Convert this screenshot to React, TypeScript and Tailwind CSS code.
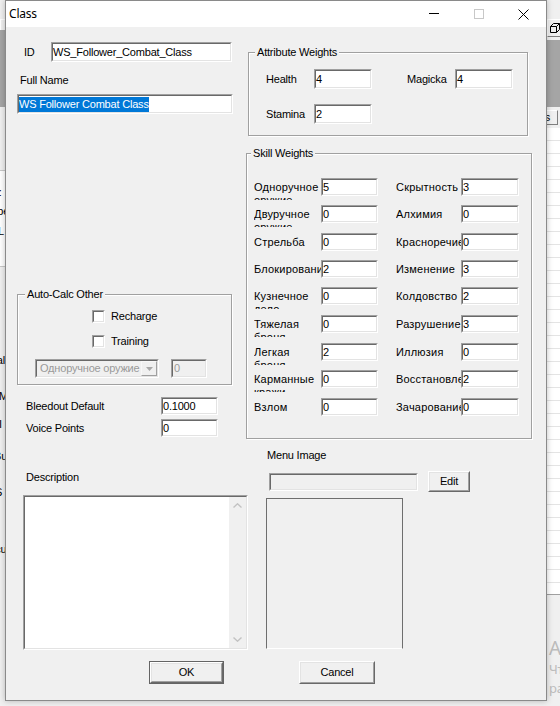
import type { ReactNode } from 'react'

type Skill = { name: string; value: string }

// vertical gap above each skill row (inputs are 18px tall)
const SKILL_ROWS: { gap: string; left: Skill; right: Skill }[] = [
  { gap: '', left: { name: 'Одноручное оружие', value: '5' }, right: { name: 'Скрытность', value: '3' } },
  { gap: 'mt-[9px]', left: { name: 'Двуручное оружие', value: '0' }, right: { name: 'Алхимия', value: '0' } },
  { gap: 'mt-[10px]', left: { name: 'Стрельба', value: '0' }, right: { name: 'Красноречие', value: '0' } },
  { gap: 'mt-[9px]', left: { name: 'Блокирование', value: '2' }, right: { name: 'Изменение', value: '3' } },
  { gap: 'mt-[9px]', left: { name: 'Кузнечное дело', value: '0' }, right: { name: 'Колдовство', value: '2' } },
  { gap: 'mt-[10px]', left: { name: 'Тяжелая броня', value: '0' }, right: { name: 'Разрушение', value: '3' } },
  { gap: 'mt-[10px]', left: { name: 'Легкая броня', value: '2' }, right: { name: 'Иллюзия', value: '0' } },
  { gap: 'mt-[9px]', left: { name: 'Карманные кражи', value: '0' }, right: { name: 'Восстановление', value: '2' } },
  { gap: 'mt-[10px]', left: { name: 'Взлом', value: '0' }, right: { name: 'Зачарование', value: '0' } },
]

function Sunken({
  className = '',
  face = 'bg-white',
  children,
}: {
  className?: string
  face?: string
  children?: ReactNode
}) {
  return (
    <div
      className={`shrink-0 border border-t-[#a0a0a0] border-l-[#a0a0a0] border-r-white border-b-white ${className}`}
    >
      <div
        className={`flex h-full items-center overflow-hidden whitespace-nowrap border border-t-[#696969] border-l-[#696969] border-r-[#e3e3e3] border-b-[#e3e3e3] ${face}`}
      >
        {children}
      </div>
    </div>
  )
}

function TextBox({ value, className }: { value?: string; className: string }) {
  return (
    <Sunken className={className}>
      <span className="leading-[13px]">{value}</span>
    </Sunken>
  )
}

function PushButton({
  label,
  className,
  isDefault = false,
}: {
  label: string
  className: string
  isDefault?: boolean
}) {
  const face = (
    <div className="h-full border border-t-white border-l-white border-r-[#696969] border-b-[#696969]">
      <div className="flex h-full items-center justify-center border border-t-[#e3e3e3] border-l-[#e3e3e3] border-r-[#a0a0a0] border-b-[#a0a0a0] bg-[#f0f0f0]">
        {label}
      </div>
    </div>
  )
  return (
    <div className={`shrink-0 ${isDefault ? 'border border-[#646464]' : ''} ${className}`}>
      {face}
    </div>
  )
}

function Group({
  title,
  className,
  captionAt,
  children,
}: {
  title: string
  className: string
  captionAt: string
  children: ReactNode
}) {
  return (
    <div
      className={`relative shrink-0 border border-[#a0a0a0] shadow-[inset_1px_1px_0_#fff,1px_1px_0_#fff] ${className}`}
    >
      <span
        className={`absolute -top-[7px] bg-[#f0f0f0] px-[2px] leading-[13px] whitespace-nowrap ${captionAt}`}
      >
        {title}
      </span>
      {children}
    </div>
  )
}

function CheckBox({ label, className = '' }: { label: string; className?: string }) {
  return (
    <div className={`flex items-center ${className}`}>
      <Sunken className="h-[13px] w-[13px]" />
      <span className="ml-[6px] leading-[13px]">{label}</span>
    </div>
  )
}

function Chevron({ up }: { up: boolean }) {
  return (
    <svg width="9" height="5" viewBox="0 0 9 5" className="block">
      <polyline
        points={up ? '0.5,4.5 4.5,0.8 8.5,4.5' : '0.5,0.5 4.5,4.2 8.5,0.5'}
        fill="none"
        stroke="#c2c2c2"
        strokeWidth="1.4"
      />
    </svg>
  )
}

function SkillCell({ skill, labelWidth, inputWidth }: { skill: Skill; labelWidth: string; inputWidth: string }) {
  return (
    <>
      <div
        className={`mt-[3px] h-[19px] shrink-0 overflow-hidden leading-[13px] tracking-[0.2px] ${labelWidth}`}
      >
        {skill.name}
      </div>
      <TextBox value={skill.value} className={`h-[18px] ${inputWidth}`} />
    </>
  )
}

function TitleBar() {
  return (
    <div className="flex h-[26px] shrink-0 items-center bg-white">
      <span className="ml-[3px] font-['Noto_Sans',sans-serif] text-[12px] tracking-[-0.2px]">Class</span>
      <div className="ml-auto flex h-full">
        <div className="flex w-[45px] items-center justify-center">
          <svg width="10" height="10" viewBox="0 0 10 10">
            <line x1="0" y1="4.5" x2="10" y2="4.5" stroke="#000" strokeWidth="1" />
          </svg>
        </div>
        <div className="flex w-[45px] items-center justify-center">
          <svg width="10" height="10" viewBox="0 0 10 10">
            <rect x="0.5" y="0.5" width="9" height="9" fill="none" stroke="#c8c8c8" strokeWidth="1" />
          </svg>
        </div>
        <div className="flex w-[45px] items-center justify-center">
          <svg width="11" height="11" viewBox="0 0 11 11">
            <path d="M0.5 0.5 L10.5 10.5 M10.5 0.5 L0.5 10.5" stroke="#000" strokeWidth="1" />
          </svg>
        </div>
      </div>
    </div>
  )
}

function ClassDialog() {
  return (
    <div className="absolute left-[5px] top-0 flex h-[701px] w-[542px] flex-col border border-[#8a8a8a] bg-[#f0f0f0] shadow-[0_0_6px_rgba(0,0,0,0.25)]">
      <TitleBar />

      <div className="flex flex-1 flex-col">
        {/* id / name + attributes */}
        <div className="flex items-start pt-[15px]">
          <div className="ml-[11px] w-[216px] shrink-0">
            <div className="flex items-center">
              <span className="ml-[7px] w-[27px]">ID</span>
              <TextBox value="WS_Follower_Combat_Class" className="h-[20px] w-[181px]" />
            </div>
            <div className="ml-[3px] mt-[12px] leading-[13px]">Full Name</div>
            <Sunken className="mt-[7px] h-[20px] w-[216px]">
              <span className="bg-[#0078d7] leading-[15px] text-white">WS Follower Combat Class</span>
            </Sunken>
          </div>

          <Group title="Attribute Weights" captionAt="left-[6px]" className="ml-[15px] mt-[10px] h-[84px] w-[280px]">
            <div className="pl-[17px] pt-[16px]">
              <div className="flex items-center">
                <span className="w-[48px]">Health</span>
                <TextBox value="4" className="h-[20px] w-[58px]" />
                <span className="ml-[35px] w-[48px]">Magicka</span>
                <TextBox value="4" className="h-[20px] w-[58px]" />
              </div>
              <div className="mt-[15px] flex items-center">
                <span className="w-[48px]">Stamina</span>
                <TextBox value="2" className="h-[20px] w-[58px]" />
              </div>
            </div>
          </Group>
        </div>

        {/* auto-calc + skills */}
        <div className="mt-[17px] flex items-start">
          <div className="w-[240px] shrink-0">
            <Group title="Auto-Calc Other" captionAt="left-[7px]" className="ml-[11px] mt-[141px] h-[91px] w-[215px]">
              <div className="pt-[15px]">
                <CheckBox label="Recharge" className="ml-[74px]" />
                <CheckBox label="Training" className="ml-[74px] mt-[12px]" />
                <div className="ml-[17px] mt-[11px] flex">
                  <Sunken className="h-[19px] w-[124px]" face="bg-[#f0f0f0] text-[#9a9a9a]">
                    <span className="min-w-0 flex-1 overflow-hidden pl-[3px]">Одноручное оружие</span>
                    <div className="h-full w-[16px] shrink-0 border border-t-[#f8f8f8] border-l-[#f8f8f8] border-r-[#a0a0a0] border-b-[#a0a0a0]">
                      <div className="flex h-full items-center justify-center bg-[#f0f0f0]">
                        <svg width="7" height="4" viewBox="0 0 7 4">
                          <path d="M0 0 H7 L3.5 4 Z" fill="#a8a8a8" />
                        </svg>
                      </div>
                    </div>
                  </Sunken>
                  <Sunken className="ml-[12px] h-[19px] w-[36px]" face="bg-[#f0f0f0] text-[#9a9a9a]">
                    <span className="pl-px">0</span>
                  </Sunken>
                </div>
              </div>
            </Group>

            <div className="mt-[12px] flex items-center">
              <span className="ml-[20px] w-[135px]">Bleedout Default</span>
              <TextBox value="0.1000" className="h-[18px] w-[57px]" />
            </div>
            <div className="mt-[4px] flex items-center">
              <span className="ml-[20px] w-[135px]">Voice Points</span>
              <TextBox value="0" className="h-[18px] w-[57px]" />
            </div>
          </div>

          <Group title="Skill Weights" captionAt="left-[4px]" className="h-[286px] w-[286px]">
            <div className="pl-[7px] pt-[24px]">
              {SKILL_ROWS.map((row) => (
                <div key={row.left.name} className={`flex h-[18px] items-start ${row.gap}`}>
                  <SkillCell skill={row.left} labelWidth="w-[67px]" inputWidth="w-[57px]" />
                  <div className="w-[18px] shrink-0" />
                  <SkillCell skill={row.right} labelWidth="w-[65px]" inputWidth="w-[58px]" />
                </div>
              ))}
            </div>
          </Group>
        </div>

        {/* description + menu image */}
        <div className="flex items-start">
          <div className="w-[245px] shrink-0">
            <div className="ml-[20px] mt-[32px] leading-[13px]">Description</div>
            <Sunken className="ml-[17px] mt-[11px] h-[155px] w-[225px]">
              <div className="flex h-full w-full">
                <div className="flex-1 bg-white" />
                <div className="flex w-[17px] flex-col items-center justify-between bg-[#f0f0f0] py-[6px]">
                  <Chevron up />
                  <Chevron up={false} />
                </div>
              </div>
            </Sunken>
          </div>

          <div className="flex-1">
            <div className="ml-[16px] mt-[10px] leading-[13px]">Menu Image</div>
            <div className="ml-[18px] mt-[9px] flex items-center">
              <Sunken className="h-[18px] w-[149px]" face="bg-[#f0f0f0]" />
              <PushButton label="Edit" className="ml-[10px] h-[21px] w-[42px]" />
            </div>
            <div className="ml-[15px] mt-[6px] h-[151px] w-[137px] border border-[#6e6e6e] border-b-white" />
          </div>
        </div>

        <div className="mt-[11px] flex">
          <PushButton label="OK" isDefault className="ml-[143px] h-[23px] w-[75px]" />
          <PushButton label="Cancel" className="ml-[75px] h-[23px] w-[76px]" />
        </div>
      </div>
    </div>
  )
}

// editor window peeking out from behind the dialog
function Backdrop() {
  return (
    <div className="absolute inset-0 bg-[#f0f0f0]">
      <div className="absolute left-0 top-[19px] h-[18px] w-[20px] border border-t-white border-l-white border-r-[#808080] border-b-[#808080]" />
      <div className="absolute left-[547px] top-[19px] flex h-[18px] w-[18px] items-center border border-t-white border-l-white border-r-[#808080] border-b-[#808080] pl-[2px]">
        <svg width="10" height="10" viewBox="0 0 10 10">
          <path d="M0.5 3.5 L3.5 0.5 H9.5 V6.5 L6.5 9.5 H0.5 Z M0.5 3.5 H6.5 V9.5 M6.5 3.5 L9.5 0.5" fill="none" stroke="#000" strokeWidth="1" />
        </svg>
      </div>
      <div className="absolute left-0 top-[30px] h-[77px] w-[20px] bg-[#a5a5a5]" />
      <div className="absolute left-[540px] top-[40px] h-[67px] w-[20px] bg-[#a5a5a5]" />
      <div className="absolute left-[480px] top-[110px] flex h-[15px] w-[78px] items-center justify-end border border-t-white border-l-white border-r-[#808080] border-b-[#808080] pr-[7px] text-[11px]">
        Options
      </div>
      <div className="absolute left-[520px] top-[128px] h-[467px] w-[40px] border-b border-[#a0a0a0] bg-white bg-[repeating-linear-gradient(to_bottom,transparent_0,transparent_12px,#e4e4e4_12px,#e4e4e4_13px)]" />
      <div className="absolute left-0 top-[170px] h-[97px] w-[20px] border-y border-[#c8c8c8] bg-white" />

      <span className="absolute left-[-4px] top-[186px] leading-[13px]">::</span>
      <span className="absolute left-[-14px] top-[205px] leading-[13px]">Type</span>
      <span className="absolute left-[-2px] top-[225px] leading-[13px]">L</span>
      <span className="absolute left-[-11px] top-[354px] leading-[13px]">Calc</span>
      <span className="absolute left-[-1px] top-[390px] leading-[13px]">M</span>
      <span className="absolute left-[-1px] top-[418px] leading-[13px]">I</span>
      <span className="absolute left-[-6px] top-[450px] leading-[13px]">Bu</span>
      <span className="absolute left-[-5px] top-[486px] leading-[13px]">S</span>
      <span className="absolute left-[-12px] top-[543px] leading-[13px]">Scu</span>

      <div className="absolute left-[549px] top-[636px] whitespace-nowrap font-['Noto_Sans',sans-serif] text-[#bcbcbc]">
        <div className="text-[19px] leading-[24px]">Активация Windows</div>
        <div className="text-[13px] leading-[19px]">Чтобы активировать Windows, перейдите в</div>
        <div className="text-[13px] leading-[19px]">раздел "Параметры".</div>
      </div>
    </div>
  )
}

export default function App() {
  return (
    <div className="relative h-[706px] w-[560px] overflow-hidden font-['Liberation_Sans',Arial,sans-serif] text-[11px] tracking-[-0.2px] text-black">
      <Backdrop />
      <ClassDialog />
    </div>
  )
}
